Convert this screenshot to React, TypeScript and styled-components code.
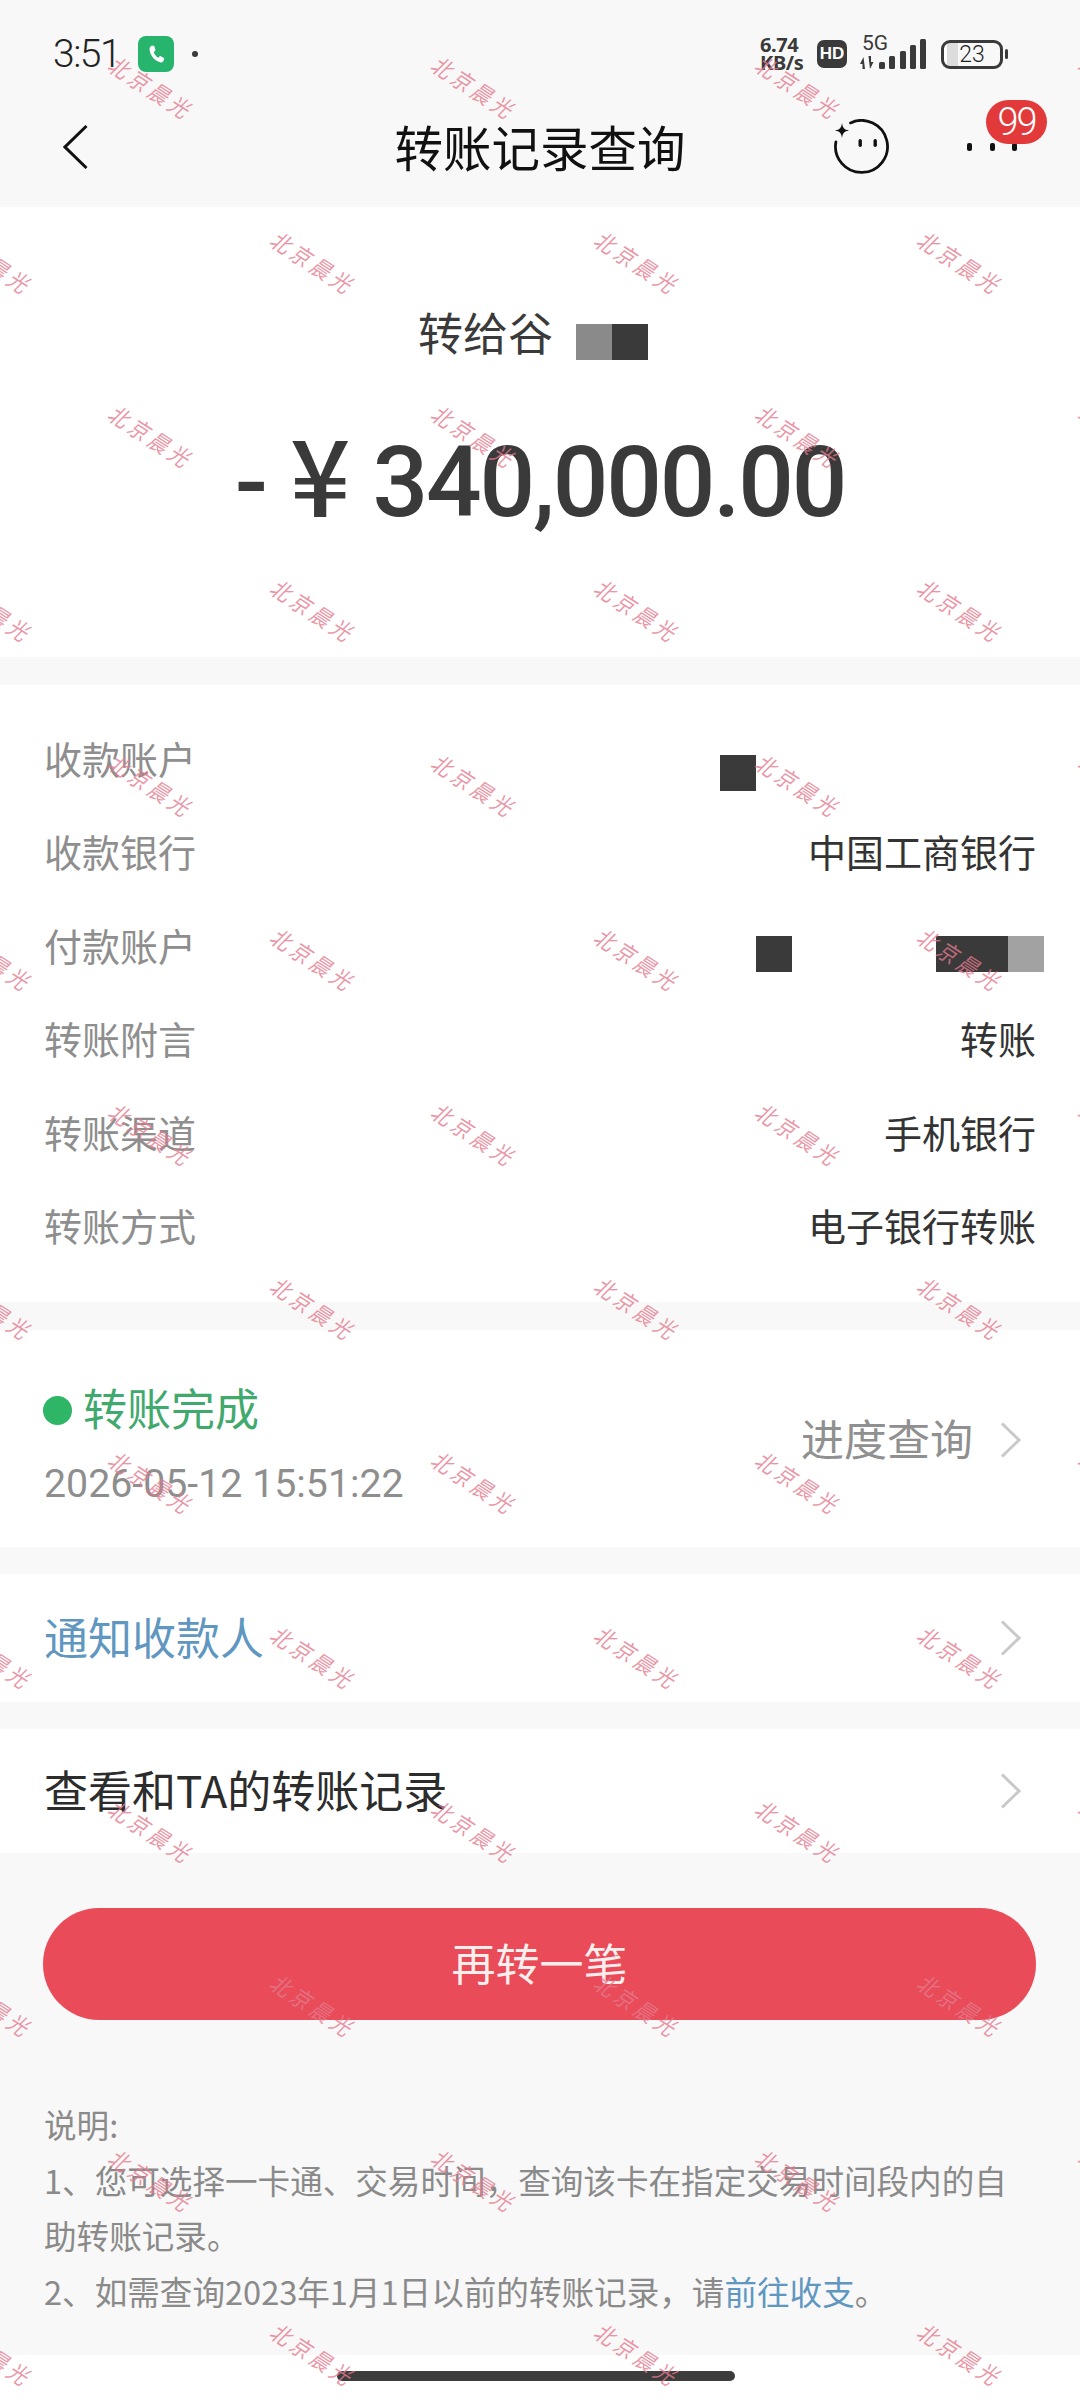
import styled, { createGlobalStyle } from 'styled-components'

const FONT = `"Noto Sans CJK SC", "Noto Sans", sans-serif`
const NUM_FONT = `Roboto, "Noto Sans CJK SC", sans-serif`

const details = [
  { label: '收款账户', value: '', masks: 'single' },
  { label: '收款银行', value: '中国工商银行' },
  { label: '付款账户', value: '', masks: 'double' },
  { label: '转账附言', value: '转账' },
  { label: '转账渠道', value: '手机银行' },
  { label: '转账方式', value: '电子银行转账' },
]

const watermarkRows = Array.from({ length: 14 }, (_, i) => i)

const Chevron = () => (
  <ChevronSvg viewBox="0 0 21 36">
    <path d="M2 1.5 L19 18 L2 34.5" fill="none" stroke="#c9c9c9" strokeWidth="3" />
  </ChevronSvg>
)

const Watermarks = () => (
  <WatermarkLayer>
    {watermarkRows.map((row) => (
      <WatermarkRow key={row} $shifted={row % 2 === 1}>
        {[0, 1, 2, 3].map((col) => (
          <WatermarkCell key={col}>
            <WatermarkText>北京晨光</WatermarkText>
          </WatermarkCell>
        ))}
      </WatermarkRow>
    ))}
  </WatermarkLayer>
)

export default function App() {
  return (
    <Page>
      <GlobalStyle />
      <StatusBar>
        <StatusLeft>
          <Time>3:51</Time>
          <CallBadge>
            <svg width="22" height="22" viewBox="0 0 24 24">
              <path
                d="M7 3 L10 3 L11.5 8 L9.5 10 C10.5 12.5 12 14.5 14.5 16 L16.5 14 L21 16.5 L20 20 C19.5 21 18 21.5 16.5 21 C10.5 19 6 14 5 7.5 C4.8 5.5 5.5 3.8 7 3 Z"
                fill="#fff"
              />
            </svg>
          </CallBadge>
          <StatusDot />
        </StatusLeft>
        <StatusRight>
          <Speed>
            <span>6.74</span>
            <span>KB/s</span>
          </Speed>
          <HdBadge>HD</HdBadge>
          <Network>
            <NetworkLabel>5G</NetworkLabel>
            <svg width="66" height="30" viewBox="0 0 66 30">
              <path d="M3.5 18 L0 25 L2.5 25 L2.5 30 L5 30 Z M10 30 L13.5 23 L11 23 L11 17 L8.5 17 Z" fill="#3a3a3a" />
              <rect x="19" y="23" width="6" height="7" rx="1.5" fill="#3a3a3a" />
              <rect x="29" y="17" width="6" height="13" rx="1.5" fill="#3a3a3a" />
              <rect x="40" y="12" width="6" height="18" rx="1.5" fill="#3a3a3a" />
              <rect x="50" y="6" width="6" height="24" rx="1.5" fill="#3a3a3a" />
              <rect x="60" y="0" width="6" height="30" rx="1.5" fill="#3a3a3a" />
            </svg>
          </Network>
          <Battery>23</Battery>
          <BatteryCap />
        </StatusRight>
      </StatusBar>

      <NavBar>
        <BackButton>
          <svg width="25" height="44" viewBox="0 0 25 44">
            <path d="M23.5 1 L2 22 L23.5 43" fill="none" stroke="#111" strokeWidth="3" />
          </svg>
        </BackButton>
        <Title>转账记录查询</Title>
        <NavActions>
          <svg width="56" height="56" viewBox="0 0 56 56">
            <path
              d="M16.5 3.9 A26 26 0 1 1 1.9 22.9"
              fill="none"
              stroke="#111"
              strokeWidth="2.8"
              strokeLinecap="round"
            />
            <path d="M8 4 C8.8 9 10 10.6 15 11.5 C10 12.4 8.8 14 8 19 C7.2 14 6 12.4 1 11.5 C6 10.6 7.2 9 8 4 Z" fill="#111" />
            <rect x="24.5" y="20" width="3.4" height="8" rx="1.7" fill="#111" />
            <rect x="39.5" y="20" width="3.4" height="8" rx="1.7" fill="#111" />
          </svg>
          <MoreButton>
            <MoreDot />
            <MoreDot />
            <MoreDot />
            <CountBadge>99</CountBadge>
          </MoreButton>
        </NavActions>
      </NavBar>

      <Hero>
        <NameRow>
          <Name>转给谷</Name>
          <NameMask>
            <MaskBlock $tone="#8a8a8a" />
            <MaskBlock $tone="#3a3a3a" />
          </NameMask>
        </NameRow>
        <Amount>
          <span>-</span>
          <Yen>¥</Yen>
          <Digits>340,000.00</Digits>
        </Amount>
      </Hero>

      <DetailCard>
        {details.map((item) => (
          <DetailRow key={item.label}>
            <DetailLabel>{item.label}</DetailLabel>
            {item.value && <DetailValue>{item.value}</DetailValue>}
            {item.masks === 'single' && (
              <SingleMask>
                <MaskBlock $tone="#3a3a3a" />
              </SingleMask>
            )}
            {item.masks === 'double' && (
              <DoubleMask>
                <MaskBlock $tone="#3a3a3a" />
                <MaskGroup>
                  <MaskBlock $tone="#3a3a3a" />
                  <MaskBlock $tone="#3a3a3a" />
                  <MaskBlock $tone="#a2a2a2" />
                </MaskGroup>
              </DoubleMask>
            )}
          </DetailRow>
        ))}
      </DetailCard>

      <ProgressCard>
        <ProgressInfo>
          <ProgressStatus>
            <GreenDot />
            <LiftedText>转账完成</LiftedText>
          </ProgressStatus>
          <ProgressTime>2026-05-12 15:51:22</ProgressTime>
        </ProgressInfo>
        <ProgressLink>
          <LiftedText>进度查询</LiftedText>
          <Chevron />
        </ProgressLink>
      </ProgressCard>

      <LinkRow $height={128} $gap={27}>
        <LinkText $color="#5f97c0">通知收款人</LinkText>
        <Chevron />
      </LinkRow>
      <LinkRow $height={124} $gap={0}>
        <LinkText $color="#2c2c2c">查看和TA的转账记录</LinkText>
        <Chevron />
      </LinkRow>

      <AgainButton>再转一笔</AgainButton>

      <Notes>
        <NoteLine>说明:</NoteLine>
        <NoteLine>1、您可选择一卡通、交易时间，查询该卡在指定交易时间段内的自助转账记录。</NoteLine>
        <NoteLine>
          2、如需查询2023年1月1日以前的转账记录，请<NoteLink>前往收支</NoteLink>。
        </NoteLine>
      </Notes>

      <HomeStrip>
        <HomeBar />
      </HomeStrip>

      <Watermarks />
    </Page>
  )
}

const GlobalStyle = createGlobalStyle`
  html, body {
    margin: 0;
    padding: 0;
    background: #f8f8f8;
  }
`

const Page = styled.div`
  position: relative;
  display: flex;
  flex-direction: column;
  width: 1080px;
  height: 2400px;
  overflow: hidden;
  background: #f8f8f8;
  font-family: ${FONT};
`

const StatusBar = styled.div`
  display: flex;
  justify-content: space-between;
  align-items: center;
  box-sizing: border-box;
  height: 87px;
  padding: 36px 72px 15px 53px;
`

const StatusLeft = styled.div`
  display: flex;
  align-items: center;
`

const Time = styled.span`
  width: 85px;
  font-family: ${NUM_FONT};
  font-size: 39px;
  font-weight: 300;
  letter-spacing: -1.5px;
  color: #222;
`

const CallBadge = styled.div`
  display: flex;
  align-items: center;
  justify-content: center;
  width: 36px;
  height: 36px;
  border-radius: 8px;
  background: #27b46c;
`

const StatusDot = styled.div`
  width: 6px;
  height: 6px;
  margin-left: 18px;
  border-radius: 50%;
  background: #3a3a3a;
`

const StatusRight = styled.div`
  display: flex;
  align-items: center;
`

const Speed = styled.div`
  display: flex;
  flex-direction: column;
  width: 48px;
  margin-right: 9px;
  font-family: "Noto Sans", sans-serif;
  font-weight: 700;
  font-size: 20px;
  line-height: 18px;
  letter-spacing: -0.4px;
  color: #3a3a3a;
  white-space: nowrap;
`

const HdBadge = styled.div`
  display: flex;
  align-items: center;
  justify-content: center;
  width: 30px;
  height: 28px;
  margin-right: 13px;
  border-radius: 7px;
  background: #3a3a3a;
  color: #fff;
  font-family: "Liberation Sans", sans-serif;
  font-weight: 700;
  font-size: 17px;
`

const Network = styled.div`
  position: relative;
  width: 66px;
  height: 30px;
  margin-right: 15px;
`

const NetworkLabel = styled.span`
  position: absolute;
  left: 2px;
  top: -6px;
  font-family: Roboto, sans-serif;
  font-size: 21px;
  line-height: 20px;
  color: #3a3a3a;
`

const Battery = styled.div`
  display: flex;
  align-items: center;
  justify-content: center;
  box-sizing: border-box;
  width: 62px;
  height: 29px;
  border: 3px solid #3a3a3a;
  border-radius: 9px;
  background: linear-gradient(90deg, #fff 0 3px, #dcdcdc 3px 14px, transparent 14px);
  font-family: Roboto, sans-serif;
  font-size: 23px;
  font-weight: 300;
  color: #222;
`

const BatteryCap = styled.div`
  width: 3px;
  height: 10px;
  margin-left: 2px;
  border-radius: 2px;
  background: #3a3a3a;
`

const NavBar = styled.div`
  display: grid;
  grid-template-columns: 1fr auto 1fr;
  align-items: center;
  box-sizing: border-box;
  height: 120px;
  padding: 0 63px;
`

const BackButton = styled.div`
  display: flex;
`

const Title = styled.div`
  padding-bottom: 3px;
  font-size: 48.5px;
  line-height: 60px;
  color: #111;
`

const NavActions = styled.div`
  display: flex;
  justify-content: flex-end;
  align-items: center;
  gap: 77px;
`

const MoreButton = styled.div`
  position: relative;
  display: flex;
  justify-content: space-between;
  width: 50px;
`

const MoreDot = styled.div`
  width: 5px;
  height: 8px;
  border-radius: 2px;
  background: #111;
`

const CountBadge = styled.div`
  position: absolute;
  left: 19px;
  top: -43px;
  display: flex;
  align-items: center;
  justify-content: center;
  width: 61px;
  height: 44px;
  border-radius: 22px;
  background: #e23a3a;
  color: #fff;
  font-family: Roboto, sans-serif;
  font-size: 38px;
  font-weight: 300;
  letter-spacing: -2px;
  line-height: 44px;
`

const Hero = styled.div`
  display: flex;
  flex-direction: column;
  align-items: center;
  box-sizing: border-box;
  height: 450px;
  margin-bottom: 28px;
  padding-top: 98px;
  background: #fff;
`

const NameRow = styled.div`
  display: flex;
  align-items: center;
  height: 60px;
  gap: 23px;
  padding-right: 14px;
`

const Name = styled.span`
  padding-bottom: 6px;
  font-size: 45px;
  line-height: 60px;
  color: #3a3a3a;
`

const NameMask = styled.div`
  display: flex;
  margin-top: 14px;
`

const MaskBlock = styled.div<{ $tone: string }>`
  width: 36px;
  height: 36px;
  background: ${(props) => props.$tone};
`

const Amount = styled.div`
  display: flex;
  justify-content: center;
  gap: 22px;
  margin-top: 58px;
  font-family: Roboto, sans-serif;
  font-weight: 500;
  font-size: 98px;
  line-height: 120px;
  color: #3a3a3a;
`

const Yen = styled.span`
  margin-top: -12px;
  font-family: ${FONT};
  font-weight: 500;
  font-size: 106px;
`

const Digits = styled.span`
  letter-spacing: -2.2px;
`

const DetailCard = styled.div`
  display: flex;
  flex-direction: column;
  box-sizing: border-box;
  height: 617px;
  margin-bottom: 28px;
  padding: 26px 44px 30px 44px;
  background: #fff;
`

const DetailRow = styled.div`
  display: flex;
  justify-content: space-between;
  align-items: center;
  flex: 1;
  font-size: 38px;
  line-height: 50px;
`

const DetailLabel = styled.span`
  color: #8e8e8e;
`

const DetailValue = styled.span`
  color: #333;
`

const SingleMask = styled.div`
  margin: 30px 280px 0 0;
`

const DoubleMask = styled.div`
  display: flex;
  gap: 144px;
  margin: 18px -8px 0 0;
`

const MaskGroup = styled.div`
  display: flex;
`

const ProgressCard = styled.div`
  display: flex;
  justify-content: space-between;
  align-items: flex-start;
  box-sizing: border-box;
  height: 217px;
  margin-bottom: 27px;
  padding: 47px 59px 0 43px;
  background: #fff;
`

const ProgressInfo = styled.div`
  display: flex;
  flex-direction: column;
  gap: 11px;
`

const ProgressStatus = styled.div`
  display: flex;
  align-items: center;
  gap: 11px;
  font-size: 44px;
  line-height: 60px;
  color: #3fa96e;
`

const LiftedText = styled.span`
  padding-bottom: 6px;
`

const GreenDot = styled.span`
  width: 29px;
  height: 29px;
  border-radius: 50%;
  background: #2fb566;
`

const ProgressTime = styled.div`
  margin-left: 1px;
  font-family: ${NUM_FONT};
  font-size: 39.3px;
  line-height: 60px;
  color: #8e8e8e;
`

const ProgressLink = styled.div`
  display: flex;
  align-items: center;
  gap: 27px;
  margin-top: 30px;
  font-size: 43px;
  line-height: 60px;
  color: #909090;
`

const ChevronSvg = styled.svg`
  display: block;
  width: 21px;
  height: 36px;
`

const LinkRow = styled.div<{ $height: number; $gap: number }>`
  display: flex;
  justify-content: space-between;
  align-items: center;
  box-sizing: border-box;
  height: ${(props) => props.$height}px;
  margin-bottom: ${(props) => props.$gap}px;
  padding: 0 59px 0 44px;
  background: #fff;
`

const LinkText = styled.span<{ $color: string }>`
  padding-bottom: 4px;
  font-size: 44px;
  line-height: 60px;
  color: ${(props) => props.$color};
`

const AgainButton = styled.div`
  display: flex;
  align-items: center;
  justify-content: center;
  flex-shrink: 0;
  box-sizing: border-box;
  height: 112px;
  margin: 55px 44px 0 43px;
  padding-bottom: 4px;
  border-radius: 56px;
  background: #e94b58;
  color: #fdeeee;
  font-size: 44px;
`

const Notes = styled.div`
  box-sizing: border-box;
  width: 1025px;
  flex: 1;
  margin-top: 76px;
  padding-left: 44px;
  font-size: 32.6px;
  line-height: 55.6px;
  color: #8a8a8a;
`

const NoteLine = styled.div``

const NoteLink = styled.span`
  color: #5f97c0;
`

const HomeStrip = styled.div`
  display: flex;
  justify-content: center;
  box-sizing: border-box;
  height: 45px;
  padding: 16px 8px 0 0;
  background: #fff;
`

const HomeBar = styled.div`
  width: 398px;
  height: 10px;
  border-radius: 5px;
  background: #3c3c3c;
`

const WatermarkLayer = styled.div`
  position: absolute;
  top: 1px;
  left: 0;
  right: 0;
  pointer-events: none;
`

const WatermarkRow = styled.div<{ $shifted: boolean }>`
  display: flex;
  height: 174.4px;
  margin-left: ${(props) => (props.$shifted ? '-170px' : '-9px')};
`

const WatermarkCell = styled.div`
  display: flex;
  align-items: center;
  justify-content: center;
  flex: 0 0 323.5px;
`

const WatermarkText = styled.span`
  transform: rotate(33deg) skewX(-12deg) scaleX(0.85);
  font-size: 23px;
  letter-spacing: 5px;
  line-height: 24px;
  white-space: nowrap;
  color: rgba(228, 122, 142, 0.78);
`
